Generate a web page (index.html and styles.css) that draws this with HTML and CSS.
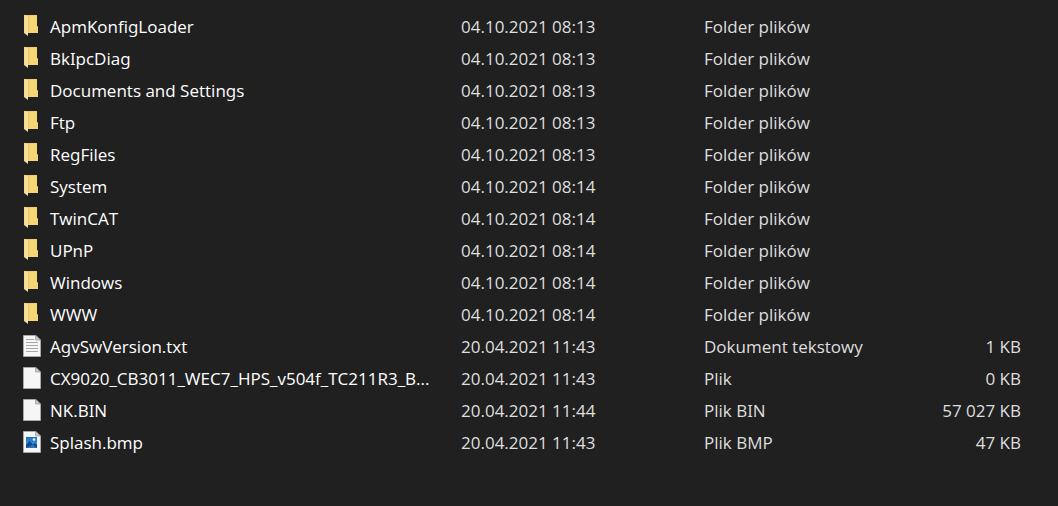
FILE: index.html
```html
<!DOCTYPE html>
<html lang="pl">
<head>
<meta charset="utf-8">
<meta name="viewport" content="width=device-width, initial-scale=1">
<title>Pliki</title>
<link rel="stylesheet" href="styles.css">
</head>
<body>
<svg class="sprite" aria-hidden="true">
  <defs>
    <linearGradient id="flap" x1="0" y1="0" x2="1" y2="0">
      <stop offset="0" stop-color="#f5d793"/>
      <stop offset="1" stop-color="#fbe3a0"/>
    </linearGradient>
    <linearGradient id="sky" x1="0" y1="0" x2="0" y2="1">
      <stop offset="0" stop-color="#1f6fc4"/>
      <stop offset="1" stop-color="#4aa0e4"/>
    </linearGradient>
    <symbol id="folder" viewBox="0 0 18 22">
      <path d="M1 0H14V11L15 12V18H4L1 17Z" fill="#eecb6c"/>
      <path d="M5 1H14V11L15 12V18H5Z" fill="#f6d675"/>
      <path d="M1 0H2L5 2V21L1 18Z" fill="url(#flap)"/>
      <path d="M5.500 2V18" stroke="#e3bb62" stroke-width=".6"/>
    </symbol>
    <symbol id="page" viewBox="0 0 18 22">
      <path d="M.5 .5H13L17.500 5V21.500H.5Z" fill="#f6f6f6" stroke="#b4b4b4" stroke-width=".7"/>
      <path d="M12.500 .5V5H17.500Z" fill="#c9c9c9" stroke="#8f8f8f" stroke-width=".6"/>
    </symbol>
    <symbol id="text" viewBox="0 0 18 22">
      <use href="#page"/>
      <path d="M3 4.500H11M3 7.500H15M3 10.500H15M3 13.500H15M3 16.500H15" stroke="#a8a8a8" stroke-width="1"/>
    </symbol>
    <symbol id="image" viewBox="0 0 18 22">
      <use href="#page"/>
      <path d="M3 6H14V17H3Z" fill="url(#sky)"/>
      <path d="M3 14L6.500 10L10 13.500L12 12L14 14V17H3Z" fill="#14497f"/>
      <path d="M3 17L8 14.500L10 13.500L14 17Z" fill="#2a76bd"/>
      <circle cx="11" cy="8.500" r="1.300" fill="#e8f6ff"/>
    </symbol>
  </defs>
</svg>
<main class="listing">
  <table class="files">
    <colgroup><col class="col-name"><col class="col-date"><col class="col-type"><col></colgroup>
    <tbody>
      <tr><td><div class="name"><svg class="icon"><use href="#folder"/></svg><span>ApmKonfigLoader</span></div></td><td>04.10.2021 08:13</td><td>Folder plików</td><td></td></tr>
      <tr><td><div class="name"><svg class="icon"><use href="#folder"/></svg><span>BkIpcDiag</span></div></td><td>04.10.2021 08:13</td><td>Folder plików</td><td></td></tr>
      <tr><td><div class="name"><svg class="icon"><use href="#folder"/></svg><span>Documents and Settings</span></div></td><td>04.10.2021 08:13</td><td>Folder plików</td><td></td></tr>
      <tr><td><div class="name"><svg class="icon"><use href="#folder"/></svg><span>Ftp</span></div></td><td>04.10.2021 08:13</td><td>Folder plików</td><td></td></tr>
      <tr><td><div class="name"><svg class="icon"><use href="#folder"/></svg><span>RegFiles</span></div></td><td>04.10.2021 08:13</td><td>Folder plików</td><td></td></tr>
      <tr><td><div class="name"><svg class="icon"><use href="#folder"/></svg><span>System</span></div></td><td>04.10.2021 08:14</td><td>Folder plików</td><td></td></tr>
      <tr><td><div class="name"><svg class="icon"><use href="#folder"/></svg><span>TwinCAT</span></div></td><td>04.10.2021 08:14</td><td>Folder plików</td><td></td></tr>
      <tr><td><div class="name"><svg class="icon"><use href="#folder"/></svg><span>UPnP</span></div></td><td>04.10.2021 08:14</td><td>Folder plików</td><td></td></tr>
      <tr><td><div class="name"><svg class="icon"><use href="#folder"/></svg><span>Windows</span></div></td><td>04.10.2021 08:14</td><td>Folder plików</td><td></td></tr>
      <tr><td><div class="name"><svg class="icon"><use href="#folder"/></svg><span>WWW</span></div></td><td>04.10.2021 08:14</td><td>Folder plików</td><td></td></tr>
      <tr><td><div class="name"><svg class="icon"><use href="#text"/></svg><span>AgvSwVersion.txt</span></div></td><td>20.04.2021 11:43</td><td>Dokument tekstowy</td><td class="size">1 KB</td></tr>
      <tr><td><div class="name"><svg class="icon"><use href="#page"/></svg><span>CX9020_CB3011_WEC7_HPS_v504f_TC211R3_B...</span></div></td><td>20.04.2021 11:43</td><td>Plik</td><td class="size">0 KB</td></tr>
      <tr><td><div class="name"><svg class="icon"><use href="#page"/></svg><span>NK.BIN</span></div></td><td>20.04.2021 11:44</td><td>Plik BIN</td><td class="size">57 027 KB</td></tr>
      <tr><td><div class="name"><svg class="icon"><use href="#image"/></svg><span>Splash.bmp</span></div></td><td>20.04.2021 11:43</td><td>Plik BMP</td><td class="size">47 KB</td></tr>
    </tbody>
  </table>
</main>
</body>
</html>
```
FILE: styles.css
```css
body {
  margin: 0;
  background: #202020;
  color: #dedede;
  font: 17px/32px "Open Sans", "Noto Sans", sans-serif;
  font-feature-settings: "ss01";
}

.sprite {
  position: absolute;
  width: 0;
  height: 0;
}

.listing {
  padding: 11px 37px 11px 23px;
}

.files {
  width: 100%;
  table-layout: fixed;
  border-collapse: collapse;
}

.col-name {
  width: 438px;
}

.col-date {
  width: 243px;
}

.col-type {
  width: 200px;
}

.files td {
  height: 32px;
  padding: 0;
  white-space: nowrap;
}

.files .size {
  text-align: right;
}

.name {
  display: flex;
  gap: 9px;
  color: #fff;
}

.icon {
  flex: none;
  width: 18px;
  height: 22px;
  margin-top: 4px;
}
```
